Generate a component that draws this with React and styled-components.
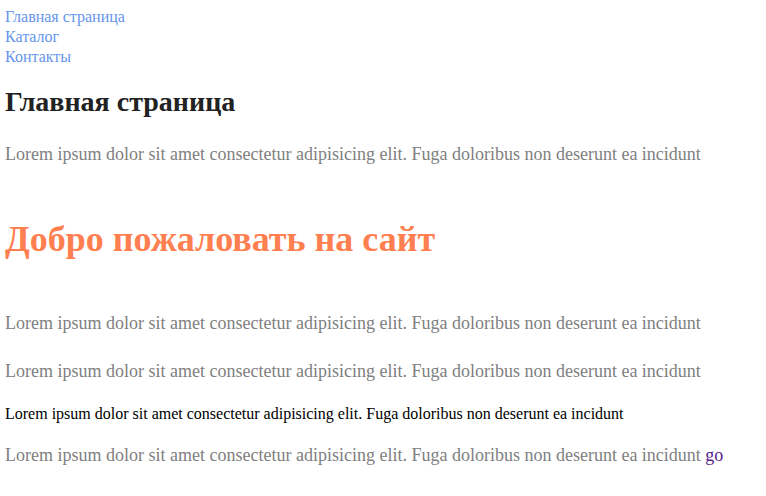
import React from 'react'
import styled, { createGlobalStyle } from 'styled-components'

const GlobalStyle = createGlobalStyle`
  body {
    margin: 7px 5px 5px;
    font-family: "Liberation Serif", "Times New Roman", serif;
    background: #fff;
  }
`

const Nav = styled.nav`
  display: flex;
  flex-direction: column;
`

const NavLink = styled.a`
  color: cornflowerblue;
  text-decoration: none;
  font-size: 16px;
  line-height: 20px;
`

const Title = styled.h2`
  font-size: 28px;
  color: #222;
  margin: 19px 0 21px;
`

const Welcome = styled.h1`
  font-size: 36px;
  color: coral;
  margin: 49px 0 48px;
`

const Text = styled.p`
  font-size: ${props => props.small ? '16px' : '18px'};
  line-height: ${props => props.small ? '17px' : '30px'};
  color: ${props => props.small ? '#000' : 'gray'};
  margin: ${props => props.small ? '16px 0' : '18px 0'};
  padding-top: ${props => props.small ? '1px' : '0'};
`

const GoLink = styled.a`
  color: #551a8b;
  text-decoration: none;
`

const lorem = 'Lorem ipsum dolor sit amet consectetur adipisicing elit. Fuga doloribus non deserunt ea incidunt'

export default function App() {
  return (
    <>
      <GlobalStyle />
      <Nav>
        <NavLink href="#">Главная страница</NavLink>
        <NavLink href="#">Каталог</NavLink>
        <NavLink href="#">Контакты</NavLink>
      </Nav>
      <Title>Главная страница</Title>
      <Text>{lorem}</Text>
      <Welcome>Добро пожаловать на сайт</Welcome>
      <Text>{lorem}</Text>
      <Text>{lorem}</Text>
      <Text small>{lorem}</Text>
      <Text>{lorem} <GoLink href="#">go</GoLink></Text>
    </>
  )
}
